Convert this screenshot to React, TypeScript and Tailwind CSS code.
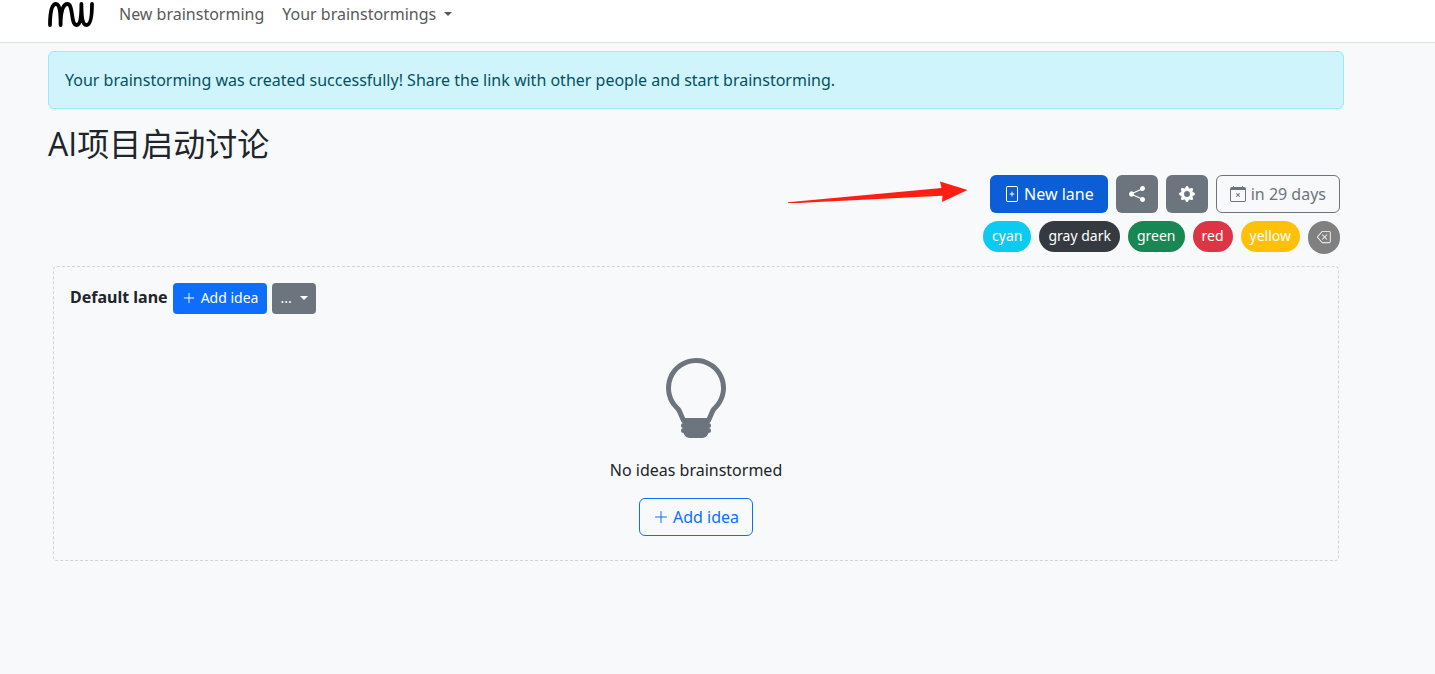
import {
  BsBackspace,
  BsCalendarX,
  BsFilePlus,
  BsGearFill,
  BsLightbulb,
  BsPlusLg,
  BsShareFill,
} from "react-icons/bs";

const labels = [
  { name: "cyan", style: "bg-[#0dcaf0]" },
  { name: "gray dark", style: "bg-[#343a40]" },
  { name: "green", style: "bg-[#198754]" },
  { name: "red", style: "bg-[#dc3545]" },
  { name: "yellow", style: "bg-[#ffc107]" },
];

function Caret() {
  return (
    <span
      aria-hidden="true"
      className="h-0 w-0 border-x-4 border-t-4 border-x-transparent border-t-current"
    />
  );
}

function Logo() {
  return (
    <svg
      viewBox="0 0 46 28"
      className="h-7 w-[46px]"
      fill="none"
      stroke="#000"
      strokeWidth="3.8"
      strokeLinecap="round"
      strokeLinejoin="round"
      aria-hidden="true"
    >
      <path d="M2 25C2 13 3.500 4 7.800 4C12 4 12.600 13 12.600 25C12.600 13 14.500 4 19.500 4C25.500 4 22.500 25 28.500 25C33 25 33.400 15 33.400 4C33.400 15 34 25 38.500 25C43 25 44 15 44 4" />
    </svg>
  );
}

function Navbar() {
  return (
    <nav className="flex h-[43px] items-start gap-[18px] border-b border-[#dee2e6] bg-white pl-12 text-[#595959]">
      <a href="#home" aria-label="Home" className="mr-[7px] block">
        <Logo />
      </a>
      <a href="#new" className="leading-7">
        New brainstorming
      </a>
      <button type="button" className="flex items-center gap-2 leading-7">
        Your brainstormings
        <Caret />
      </button>
    </nav>
  );
}

function Toolbar() {
  return (
    <div className="flex flex-col items-end gap-2 pr-1">
      <div className="flex gap-2">
        <button
          type="button"
          className="flex h-[38px] items-center gap-1 rounded-md bg-[#0b5ed7] px-[14px] text-white"
        >
          <BsFilePlus />
          New lane
        </button>
        <button
          type="button"
          aria-label="Share"
          className="flex h-[38px] w-[42px] items-center justify-center rounded-md bg-[#6c757d] text-white"
        >
          <BsShareFill />
        </button>
        <button
          type="button"
          aria-label="Settings"
          className="flex h-[38px] w-[42px] items-center justify-center rounded-md bg-[#6c757d] text-white"
        >
          <BsGearFill />
        </button>
        <button
          type="button"
          className="flex h-[38px] items-center gap-[5px] rounded-md border border-[#6c757d] px-[13px] text-[#6c757d]"
        >
          <BsCalendarX />
          in 29 days
        </button>
      </div>
      <div className="flex gap-2">
        {labels.map((label) => (
          <button
            key={label.name}
            type="button"
            className={`h-[31px] rounded-full px-[9px] pb-[2px] text-sm text-white ${label.style}`}
          >
            {label.name}
          </button>
        ))}
        <button
          type="button"
          aria-label="Clear filter"
          className="flex h-[33px] w-8 items-center justify-center rounded-full bg-[#808080] pb-[2px] text-sm text-white"
        >
          <BsBackspace />
        </button>
      </div>
    </div>
  );
}

function Lane() {
  return (
    <section className="mx-[5px] mt-3 rounded border border-dashed border-[#ced4da] px-4 pt-4 pb-6">
      <div className="flex items-start gap-[5px]">
        <h2 className="leading-7 font-bold">Default lane</h2>
        <button
          type="button"
          className="flex h-[31px] items-center gap-[5px] rounded bg-[#0d6efd] px-[9px] pb-[2px] text-sm text-white"
        >
          <BsPlusLg />
          Add idea
        </button>
        <button
          type="button"
          aria-label="Lane options"
          className="flex h-[31px] items-center gap-2 rounded bg-[#6c757d] px-2 pb-[2px] text-sm text-white"
        >
          ...
          <Caret />
        </button>
      </div>
      <div className="mt-11 flex flex-col items-center">
        <BsLightbulb className="text-[80px] text-[#6c757d]" />
        <p className="mt-5">No ideas brainstormed</p>
        <button
          type="button"
          className="mt-4 flex h-[38px] items-center gap-1 rounded-md border border-[#0d6efd] px-[13px] text-[#0d6efd]"
        >
          <BsPlusLg />
          Add idea
        </button>
      </div>
    </section>
  );
}

export default function App() {
  return (
    <div className="min-h-screen bg-[#f8f9fb] font-['Noto_Sans','Noto_Sans_CJK_SC',sans-serif] text-base text-[#212529]">
      <Navbar />
      <main className="pt-2 pr-[91px] pl-12">
        <div
          role="alert"
          className="rounded-md border border-[#9eeaf9] bg-[#cff4fc] p-4 text-[#055160]"
        >
          Your brainstorming was created successfully! Share the link with other people and start
          brainstorming.
        </div>
        <h1 className="mt-4 font-['Open_Sans','Noto_Sans_CJK_SC',sans-serif] text-[32px] leading-[38px]">
          AI项目启动讨论
        </h1>
        <div className="relative mt-3">
          <Toolbar />
          <svg
            viewBox="0 0 180 24"
            className="absolute top-1 right-[376px] h-6 w-[180px]"
            fill="#ff1e12"
            aria-hidden="true"
          >
            <path d="M0 23.300L153.500 9L152 2.500L179.500 11L154 23L154.500 16.800L0 24.500Z" />
          </svg>
        </div>
        <Lane />
      </main>
    </div>
  );
}
